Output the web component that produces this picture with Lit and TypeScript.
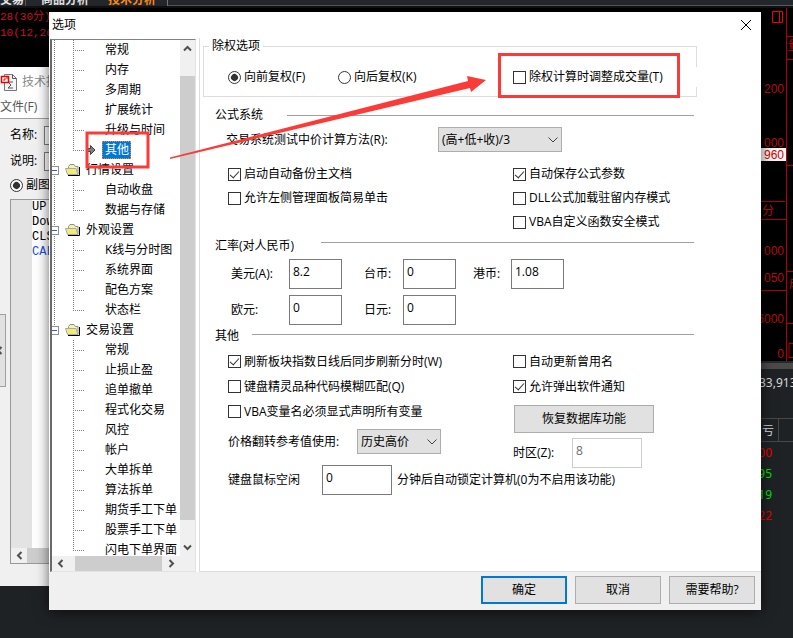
import { LitElement, html, css, svg, nothing } from "lit";
import { customElement, property, state } from "lit/decorators.js";
import { classMap } from "lit/directives/class-map.js";

interface Group {
  name: string;
  items: string[];
}

const TREE: Group[] = [
  { name: "", items: ["常规", "内存", "多周期", "扩展统计", "升级与时间", "其他"] },
  { name: "行情设置", items: ["自动收盘", "数据与存储"] },
  { name: "外观设置", items: ["K线与分时图", "系统界面", "配色方案", "状态栏"] },
  {
    name: "交易设置",
    items: [
      "常规", "止损止盈", "追单撤单", "程式化交易", "风控", "帐户",
      "大单拆单", "算法拆单", "期货手工下单", "股票手工下单", "闪电下单界面",
    ],
  },
];

const chevron = (d: string) => html`
  <svg width="9" height="9" viewBox="0 0 9 9" aria-hidden="true">
    <path d=${d} fill="none" stroke="#505050" stroke-width="2" />
  </svg>`;
const UP = "M1 6.5 4.5 3 8 6.5";
const DOWN = "M1 2.5 4.5 6 8 2.5";
const LEFT = "M6.5 1 3 4.5 6.5 8";
const RIGHT = "M2.5 1 6 4.5 2.5 8";

@customElement("option-tree")
export class OptionTree extends LitElement {
  @state() private selected = "0-5";

  static styles = css`
    :host { display: flex; flex-direction: column; min-height: 0; background: #fff;
      border: 1px solid #e3e3e3; border-top-color: #828282; border-left: 2px solid #696969; }
    .view { flex: 1 1 0; min-height: 0; display: flex; overflow: hidden; }
    .list { flex: 1; min-width: 0; margin: 0; padding: 0; list-style: none; overflow: hidden; }
    .sub { margin: 0; padding: 0; list-style: none; }
    .group {
      background: repeating-linear-gradient(to bottom, #808080 0 1px, transparent 1px 2px) 2px 0 / 1px 100% no-repeat;
    }
    .group.last { background-size: 1px 10px; }
    .leaf, .branch { display: flex; align-items: center; height: 20px; white-space: nowrap; box-sizing: border-box; }
    .leaf {
      padding-left: 34px; cursor: default;
      background:
        repeating-linear-gradient(to bottom, #808080 0 1px, transparent 1px 2px) 21px 0 / 1px 100% no-repeat,
        repeating-linear-gradient(to right, #808080 0 1px, transparent 1px 2px) 21px 10px / 11px 1px no-repeat;
    }
    .leaf.end { background-size: 1px 10px, 11px 1px; }
    .mark { flex: none; width: 16px; height: 16px; display: flex; align-items: center; }
    .name { padding: 0 2px 0 3px; line-height: 18px; }
    .leaf.on .name { background: #0078d7; color: #fff; outline: 1px dotted #ff8728; outline-offset: -1px; }
    .branch { gap: 6px; }
    .box { flex: none; width: 6px; height: 7px; border: 1px solid #919191; border-left: 0; background: #fff;
      display: flex; align-items: center; }
    .dash { width: 5px; height: 1px; background: #3b5fae; }
    .folder { flex: none; }
    .bar { display: flex; background: #f0f0f0; }
    .vert { flex: none; width: 15px; flex-direction: column; }
    .hor { height: 15px; padding-right: 15px; }
    .arrow { flex: none; display: flex; align-items: center; justify-content: center; padding: 0; border: 0;
      background: none; width: 15px; height: 17px; }
    .hor .arrow { width: 17px; height: 15px; }
    .thumb { background: #cdcdcd; flex: 1; }
    .vert .thumb { margin: 19px 0; }
    .hor .thumb { margin: 0 1px 0 6px; }
  `;

  render() {
    return html`
      <div class="view">
        <ul class="list" role="tree" aria-label="选项">
          ${TREE.map((g, gi) => html`
            <li class=${classMap({ group: true, last: gi === TREE.length - 1 })} role="none">
              ${g.name
                ? html`<div class="branch" role="treeitem" aria-expanded="true">
                    <span class="box"><span class="dash"></span></span>${this.folder()}<span>${g.name}</span>
                  </div>`
                : nothing}
              <ul class="sub" role="group">
                ${g.items.map((item, i) => {
                  const key = `${gi}-${i}`;
                  const on = key === this.selected;
                  return html`<li
                    role="treeitem"
                    aria-selected=${on}
                    class=${classMap({ leaf: true, on, end: i === g.items.length - 1 })}
                    @click=${() => (this.selected = key)}
                  ><span class="mark">${on ? this.pointer() : nothing}</span><span class="name">${item}</span></li>`;
                })}
              </ul>
            </li>`)}
        </ul>
        <div class="bar vert">
          <button class="arrow" aria-label="向上">${chevron(UP)}</button>
          <div class="thumb"></div>
          <button class="arrow" aria-label="向下">${chevron(DOWN)}</button>
        </div>
      </div>
      <div class="bar hor">
        <button class="arrow" aria-label="向左">${chevron(LEFT)}</button>
        <div class="thumb"></div>
        <button class="arrow" aria-label="向右">${chevron(RIGHT)}</button>
      </div>`;
  }

  private folder() {
    return html`<svg class="folder" width="15" height="12" viewBox="0 0 15 12" aria-hidden="true">
      <path d="M3.500 5V2.500l1.500-2h4l1.500 2h2.500V10" fill="#f3f0b0" stroke="#909090" />
      <path d="M.5 4.500h10.500l2 6H2.500z" fill="#efec78" stroke="#a8a8a8" />
      <path d="M3 11.500h11.500V3" fill="none" stroke="#000" />
    </svg>`;
  }

  private pointer() {
    return html`<svg width="10" height="12" viewBox="0 0 10 12" aria-hidden="true">
      <path d="M.5 4.500h4v-3L9 6l-4.500 4.500v-3h-4z" fill="#808080" stroke="#404040" />
    </svg>`;
  }
}

@customElement("check-item")
export class CheckItem extends LitElement {
  @property() kind = "checkbox";
  @property() label = "";
  @property({ type: Boolean }) checked = false;

  static styles = css`
    :host { display: flex; align-items: center; white-space: nowrap; }
    .wrap { display: flex; align-items: center; gap: 3px; }
    .input { appearance: none; box-sizing: border-box; flex: none; width: 13px; height: 13px; margin: 0;
      border: 1px solid #333; background: #fff; display: grid; place-items: center; }
    .input:checked::before { content: ""; width: 4px; height: 8px; margin-bottom: 2px;
      border: solid #333; border-width: 0 1px 1px 0; rotate: 42deg; }
    .radio { border-radius: 50%; }
    .radio:checked::before { width: 7px; height: 7px; margin: 0; border: 0; border-radius: 50%; background: #333; }
  `;

  render() {
    return html`<label class="wrap">
      <input
        class=${classMap({ input: true, radio: this.kind === "radio" })}
        type=${this.kind}
        .checked=${this.checked}
        @change=${(e: Event) => (this.checked = (e.target as HTMLInputElement).checked)}
      /><span>${this.label}</span>
    </label>`;
  }
}

@customElement("indicator-window")
export class IndicatorWindow extends LitElement {
  static styles = css`
    :host { display: flex; flex-direction: column; background: #f0f0f0; overflow: hidden; white-space: nowrap; }
    .title { display: flex; align-items: center; gap: 5px; height: 30px; background: #fff; color: #888; }
    .logo { flex: none; }
    .menu { height: 21px; line-height: 20px; background: #fff; color: #555; border-bottom: 1px solid #a0a0a0; margin-bottom: 3px; }
    .field { display: flex; align-items: center; height: 26px; padding-left: 10px; gap: 7px; }
    .text { width: 40px; height: 19px; box-sizing: border-box; border: 1px solid #7a7a7a; background: #fff; padding: 0 2px;
      font: 12px "Liberation Serif", serif; }
    .sub { padding-left: 10px; height: 22px; }
    .code { flex: 1; margin: 3px 0 22px 10px; border: 1px solid #999; border-right: 0; background: #fff; display: flex; flex-direction: column; }
    .body { flex: 1; border-left: 21px solid #e3e3e3; font: 12px/15px "Liberation Mono", monospace; margin: 0; }
    .blue { color: #1650e0; }
    .bar { display: flex; align-items: center; height: 15px; background: #f0f0f0; }
    .arrow { border: 0; padding: 0; width: 16px; background: none; display: flex; justify-content: center; }
    .thumb { flex: 1; height: 15px; background: #cdcdcd; }
    .grip { position: absolute; left: -1px; top: 247px; width: 7px; height: 73px; padding: 0; overflow: hidden;
      border: 1px solid #a0a0a0; background: #e1e1e1; display: flex; align-items: center; }
    .grip svg { flex: none; margin-left: -5px; }
  `;

  render() {
    return html`
      <div class="title">
        <svg class="logo" width="17" height="17" viewBox="0 0 17 17" aria-hidden="true">
          <path d="M4.500.5h8l4 4v12h-12z" fill="#f4f4f4" stroke="#777" />
          <path d="M12.500.5v4h4M13 8H8l3 3-3 3h5" fill="none" stroke="#555" />
          <rect x="1.500" y="2.500" width="7" height="6" fill="#fff" stroke="#e00" stroke-width="1.500" />
          <path d="M3 6h2V4M6 4h2" fill="none" stroke="#e00" />
        </svg>技术指
      </div>
      <div class="menu">文件(F)</div>
      <label class="field">名称:<input class="text" /></label>
      <label class="field">说明:<input class="text" /></label>
      <check-item class="sub" kind="radio" label="副图" checked></check-item>
      <div class="code">
        <pre class="body">UP
Dow
CLS
<span class="blue">CAL</span></pre>
        <div class="bar"><button class="arrow" aria-label="向左">${chevron(LEFT)}</button><div class="thumb"></div></div>
      </div>
      <button class="grip" aria-label="收起">${chevron(LEFT)}</button>`;
  }
}

@customElement("market-desktop")
export class MarketDesktop extends LitElement {
  static styles = css`
    :host { display: flex; flex-direction: column; background: #1f2225; overflow: hidden; }
    .tabs { height: 8px; overflow: hidden; display: flex; background: #24272b; box-sizing: border-box;
      border-bottom: 2px solid #111; line-height: 0; font-size: 12px; font-weight: 700; color: #e4e4e4; }
    .tab { width: 25px; border-right: 1px solid #555; white-space: nowrap; }
    .tab.mid { width: 82px; text-indent: 15px; border: 0; }
    .tab.hot { width: 59px; color: #ff8c1a; border-right: 1px solid #777; }
    .rest { flex: 1; border-bottom: 1px solid #555b60; height: 5px; }
    .chart { height: 353px; background: #000; display: flex; justify-content: space-between; }
    .names { margin: 1px 0; font: 11px/16px "Liberation Mono", "Noto Sans CJK SC", monospace; color: #c8102e; }
    .split { height: 6px; border-top: 2px solid #25282c; background: #4a4a4a; }
    .quotes { flex: 1; display: flex; justify-content: flex-end; }
    .axis { font: 12px "Liberation Sans", "Noto Sans CJK SC", sans-serif; }
    .num { font: 12px "Noto Sans", "Noto Sans CJK SC", sans-serif; }
  `;

  render() {
    const labels: [number, string][] = [
      [93, "200"], [147, "000"], [255, "000"], [282, "050"], [323, "6000"], [358, "0"],
    ];
    const rows: [number, string, string][] = [
      [88, "00", "#e80000"], [109, "95", "#00e000"], [130, "19", "#00e000"], [151, "22", "#e00000"],
    ];
    return html`
      <div class="tabs">
        <span class="tab">交易</span><span class="tab mid">商品分析</span><span class="tab hot">技术分析</span>
        <span class="rest"></span>
      </div>
      <div class="chart">
        <pre class="names">28(30分)
10(12,26</pre>
        <svg class="axis" width="34" height="353" viewBox="759 8 34 353">
          <path d="M786.500 8V361M787 36.500h6M787 59.500h6M787 165.500h6M761 201.500h24M761 219.500h25M787 271.500h6M761 290.500h25M787 323.500h6M793 343.500h-4v14h4"
            stroke="#b00000" fill="none" />
          <path d="M772.500 11.500h10v11h-10zM779.500 11.500v11" stroke="#f00000" fill="none" />
          ${labels.map(([y, t]) => svg`<text x="784" y=${y} text-anchor="end" fill="#b80c10">${t}</text>`)}
          <rect x="761" y="148" width="25" height="13" fill="#f4f4f4" />
          <text x="784" y="159" text-anchor="end" fill="#d00000">960</text>
          <text x="762" y="215" fill="#b80c10">分</text>
          <text x="788" y="50" fill="#b80c10">量</text>
          <text x="789" y="288" fill="#b80c10">成</text>
        </svg>
      </div>
      <div class="split"></div>
      <div class="quotes">
        <svg class="num" width="34" height="269" viewBox="0 0 34 269">
          <path d="M0 49.500h34M0 72.500h34M19.500 49v23" stroke="#484848" />
          <text x="0" y="18" fill="#d8d8d8">33,913</text>
          <text x="3" y="66" fill="#d8d8d8">亏</text>
          ${rows.map(([y, t, c]) => svg`<text x="13" y=${y} text-anchor="end" fill=${c}>${t}</text>`)}
        </svg>
      </div>`;
  }
}

@customElement("app-root")
export class AppRoot extends LitElement {
  static styles = css`
    :host { display: block; position: relative; min-height: 100vh; overflow: hidden; color: #000;
      font: 12px/16px "Open Sans", "Noto Sans CJK SC", sans-serif; }
    .desktop { position: absolute; inset: 0; }
    .indicator { position: absolute; left: 0; top: 67px; width: 60px; height: 519px; }
    .dialog { position: relative; margin: 12px 32px 28px 49px; background: #fff; box-shadow: 0 2px 12px #0009; }
    .titlebar { display: flex; justify-content: space-between; align-items: center; height: 26px; padding: 0 9px 0 3px; }
    .caption { margin: 0; font: inherit; }
    .close { border: 0; background: none; padding: 0; width: 12px; height: 12px; }
    .main { display: grid; grid-template-columns: 146px minmax(0, 1fr); column-gap: 4px; padding-left: 1px; }
    .tree { margin-top: 1px; }
    .panel { border-left: 1px solid #dcdcdc; border-bottom: 1px solid #dcdcdc; padding: 0 64px 76px 3px; margin-left: -1px; }
    .rights { margin: 0 0 8px; padding: 13px 0 9px 24px; border: 1px solid #dcdcdc; min-width: 0; }
    .legend { padding: 0 3px; margin-left: -19px; }
    .choices { display: grid; grid-template-columns: 110px 175px minmax(0, 1fr); height: 20px; }
    .adjust { background: #fff; margin-right: -1px; }
    .heading { display: flex; align-items: center; height: 20px; gap: 24px; margin: 0 3px 0 12px; font: inherit; white-space: nowrap; }
    .heading::after { content: ""; flex: 1; height: 1px; background: #a0a0a0; }
    .rates-title { margin-top: 2px; gap: 27px; }
    .rates-title::after { margin-bottom: 8px; }
    .other-title { gap: 13px; margin-top: 1px; }
    .other-title::after { margin-bottom: 4px; }
    .method { display: flex; align-items: center; margin: 2px 0 10px 23px; }
    .method-label { width: 212px; white-space: nowrap; }
    .columns { display: grid; grid-template-columns: 285px minmax(0, 1fr); padding-left: 25px; align-items: start; }
    .columns.lower { padding-top: 3px; }
    .checks { display: grid; grid-auto-rows: 24px; }
    .checks.loose { grid-auto-rows: 25px; }
    .rates { display: grid; grid-template-columns: 58px 75px 39px 70px 38px 53px; row-gap: 6px; align-items: center;
      margin-left: 28px; padding-top: 3px; }
    .edit { box-sizing: border-box; width: 53px; height: 30px; border: 1px solid #7a7a7a; background: #fff; color: #000;
      padding: 0 3px 6px; margin: 0; font: inherit; }
    .edit.wide { width: 70px; }
    .edit:disabled { border-color: #ccc; color: #6d6d6d; }
    .drop { display: grid; align-items: center; }
    .drop > * { grid-area: 1 / 1; }
    .drop svg { justify-self: end; margin-right: 4px; pointer-events: none; }
    .select { appearance: none; box-sizing: border-box; width: 124px; height: 25px; border: 1px solid #adadad; border-radius: 0;
      background: #e1e1e1; color: #000; padding: 0 3px; margin: 0; font: inherit; }
    .select.short { width: 84px; }
    .flip { display: flex; align-items: center; padding-top: 5px; }
    .flip-label { width: 129px; }
    .idle { display: flex; align-items: center; padding-top: 11px; white-space: nowrap; gap: 5px; }
    .idle > * { flex: none; }
    .idle-label { width: 89px; }
    .zone { display: flex; align-items: center; padding-top: 5px; }
    .zone-label { width: 59px; }
    .button { box-sizing: border-box; width: 86px; height: 28px; padding: 0; border: 1px solid #adadad; background: #e1e1e1;
      color: #000; font: inherit; }
    .button.default { border: 2px solid #0078d7; }
    .button.restore { width: 140px; margin: 6px 0 0 1px; display: block; }
    .footer { display: flex; justify-content: flex-end; gap: 8px; padding: 4px 6px 6px; background: #f0f0f0; }
    .notes { position: absolute; left: 0; top: 0; pointer-events: none; }
  `;

  render() {
    const dropMark = html`<svg width="10" height="8" viewBox="0 0 10 8" aria-hidden="true">
      <path d="M.5 1.500 5 6l4.500-4.500" fill="none" stroke="#444" />
    </svg>`;
    return html`
      <market-desktop class="desktop"></market-desktop>
      <indicator-window class="indicator"></indicator-window>

      <section class="dialog" role="dialog" aria-labelledby="caption">
        <header class="titlebar">
          <h1 class="caption" id="caption">选项</h1>
          <button class="close" aria-label="关闭">
            <svg width="12" height="12" viewBox="0 0 12 12"><path d="M1 1l10 10M11 1 1 11" stroke="#000" fill="none" /></svg>
          </button>
        </header>

        <div class="main">
          <option-tree class="tree"></option-tree>
          <form class="panel" @submit=${(e: Event) => e.preventDefault()}>
            <fieldset class="rights">
              <legend class="legend">除权选项</legend>
              <div class="choices">
                <check-item kind="radio" label="向前复权(F)" checked></check-item>
                <check-item kind="radio" label="向后复权(K)"></check-item>
                <check-item class="adjust" label="除权计算时调整成交量(T)"></check-item>
              </div>
            </fieldset>

            <h2 class="heading">公式系统</h2>
            <div class="method">
              <label class="method-label" for="method">交易系统测试中价计算方法(R):</label>
              <span class="drop">
                <select class="select" id="method"><option>(高+低+收)/3</option></select>${dropMark}
              </span>
            </div>
            <div class="columns">
              <div class="checks">
                <check-item label="启动自动备份主文档" checked></check-item>
                <check-item label="允许左侧管理面板简易单击"></check-item>
              </div>
              <div class="checks">
                <check-item label="自动保存公式参数" checked></check-item>
                <check-item label="DLL公式加载驻留内存模式"></check-item>
                <check-item label="VBA自定义函数安全模式"></check-item>
              </div>
            </div>

            <h2 class="heading rates-title">汇率(对人民币)</h2>
            <div class="rates">
              <label for="usd">美元(A):</label><input class="edit" id="usd" value="8.2" />
              <label for="twd">台币:</label><input class="edit" id="twd" value="0" />
              <label for="hkd">港币:</label><input class="edit" id="hkd" value="1.08" />
              <label for="eur">欧元:</label><input class="edit" id="eur" value="0" />
              <label for="jpy">日元:</label><input class="edit" id="jpy" value="0" />
            </div>

            <h2 class="heading other-title">其他</h2>
            <div class="columns lower">
              <div>
                <div class="checks loose">
                  <check-item label="刷新板块指数日线后同步刷新分时(W)" checked></check-item>
                  <check-item label="键盘精灵品种代码模糊匹配(Q)"></check-item>
                  <check-item label="VBA变量名必须显式声明所有变量"></check-item>
                </div>
                <div class="flip">
                  <label class="flip-label" for="flip">价格翻转参考值使用:</label>
                  <span class="drop">
                    <select class="select short" id="flip"><option>历史高价</option></select>${dropMark}
                  </span>
                </div>
                <div class="idle">
                  <label class="idle-label" for="idle">键盘鼠标空闲</label>
                  <input class="edit wide" id="idle" value="0" />
                  <span>分钟后自动锁定计算机(0为不启用该功能)</span>
                </div>
              </div>
              <div>
                <div class="checks loose">
                  <check-item label="自动更新曾用名"></check-item>
                  <check-item label="允许弹出软件通知" checked></check-item>
                </div>
                <button class="button restore" type="button">恢复数据库功能</button>
                <div class="zone">
                  <label class="zone-label" for="zone">时区(Z):</label>
                  <input class="edit wide" id="zone" value="8" disabled />
                </div>
              </div>
            </div>
          </form>
        </div>

        <footer class="footer">
          <button class="button default">确定</button>
          <button class="button">取消</button>
          <button class="button">需要帮助?</button>
        </footer>
      </section>

      <svg class="notes" width="793" height="200" viewBox="0 0 793 200" aria-hidden="true">
        <path d="M87 133h61v34H87zM499.500 54.500h179v42h-179z" fill="none" stroke="#fb3b38" stroke-width="3" />
        <path d="M170 157.500 468 81l-1-5 19 4-15 12-1-4L170 159z" fill="#fb3b38" />
      </svg>`;
  }
}
